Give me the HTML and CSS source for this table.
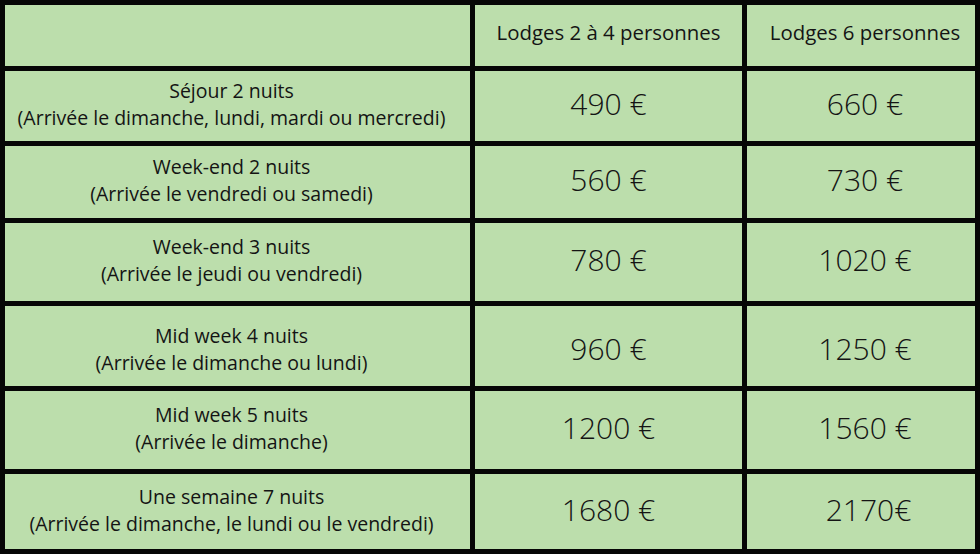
FILE: index.html
```html
<!DOCTYPE html>
<html lang="fr">
<head>
<meta charset="utf-8">
<title>Tarifs lodges</title>
<link rel="stylesheet" href="styles.css">
</head>
<body>
<div class="table">
  <div class="cell head"></div>
  <div class="cell head">Lodges 2 à 4 personnes</div>
  <div class="cell head col3">Lodges 6 personnes</div>

  <div class="cell label"><span>Séjour 2 nuits</span><span>(Arrivée le dimanche, lundi, mardi ou mercredi)</span></div>
  <div class="cell price">490 €</div>
  <div class="cell price col3">660 €</div>

  <div class="cell label"><span>Week-end 2 nuits</span><span>(Arrivée le vendredi ou samedi)</span></div>
  <div class="cell price">560 €</div>
  <div class="cell price col3">730 €</div>

  <div class="cell label"><span>Week-end 3 nuits</span><span>(Arrivée le jeudi ou vendredi)</span></div>
  <div class="cell price">780 €</div>
  <div class="cell price col3">1020 €</div>

  <div class="cell label low"><span>Mid week 4 nuits</span><span>(Arrivée le dimanche ou lundi)</span></div>
  <div class="cell price low">960 €</div>
  <div class="cell price col3 low">1250 €</div>

  <div class="cell label"><span>Mid week 5 nuits</span><span>(Arrivée le dimanche)</span></div>
  <div class="cell price">1200 €</div>
  <div class="cell price col3">1560 €</div>

  <div class="cell label"><span>Une semaine 7 nuits</span><span>(Arrivée le dimanche, le lundi ou le vendredi)</span></div>
  <div class="cell price">1680 €</div>
  <div class="cell price col3 shifted">2170€</div>
</div>
</body>
</html>
```
FILE: styles.css
```css
html, body {
  margin: 0;
  padding: 0;
  background: #ffffff;
}
.table {
  width: 980px;
  height: 554px;
  box-sizing: border-box;
  display: grid;
  grid-template-columns: 465px 267px 228px;
  grid-template-rows: 61px 70px 72px 78px 80px 78px 75px;
  gap: 5px;
  padding: 5px;
  background: #060606;
  font-family: "Open Sans", "Liberation Sans", sans-serif;
  color: #141414;
}
.cell {
  background: #bcdeac;
  display: flex;
  flex-direction: column;
  align-items: center;
  justify-content: center;
  text-align: center;
  white-space: nowrap;
}
.head {
  font-size: 20.4px;
  padding-bottom: 8px;
}
.label {
  font-size: 19.5px;
  line-height: 27px;
  padding-bottom: 4px;
  padding-right: 12px;
}
.price {
  font-size: 30px;
  font-weight: 300;
  padding-bottom: 5px;
}
.label.low {
  padding-bottom: 0;
  padding-top: 5px;
}
.price.low {
  padding-bottom: 0;
  padding-top: 5px;
}
.col3 {
  padding-left: 8px;
}
.shifted {
  padding-left: 15px;
}
```
